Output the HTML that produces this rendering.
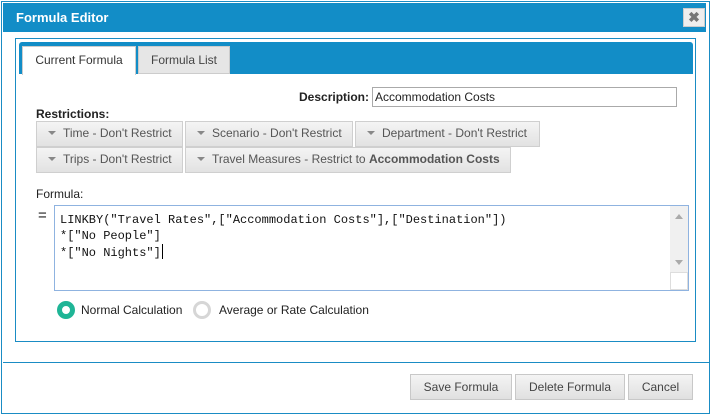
<!DOCTYPE html>
<html><head><style>
*{box-sizing:border-box;margin:0;padding:0}
body{width:714px;height:416px;background:#fff;font-family:"Liberation Sans",Arial,sans-serif;font-size:12px;color:#222;position:relative;overflow:hidden}
.a{position:absolute}
.btn{position:absolute;background:linear-gradient(#f4f4f4,#e2e2e2);border:1px solid #cfcfcf;color:#555;font-size:12px;line-height:23px;padding-left:10px;white-space:nowrap}
.btn i{display:inline-block;width:0;height:0;border-left:4px solid transparent;border-right:4px solid transparent;border-top:4px solid #888;vertical-align:middle;margin:0 7px 2px 1px}
.fb{position:absolute;background:linear-gradient(#f4f4f4,#e0e0e0);border:1px solid #c8c8c8;color:#444;text-align:center;line-height:24px}
</style></head><body>
<div class="a" style="left:1px;top:1px;width:709px;height:413px;border:1px solid #1a8cc4"></div>
<div class="a" style="left:3px;top:3px;width:703px;height:29px;background:#128dc7;color:#fff;font-weight:bold;font-size:13px;line-height:29px;padding-left:13px">Formula Editor</div>
<div class="a" style="left:683px;top:8px;width:22px;height:19px;background:#eee;border:1px solid #ccc;color:#777;font-weight:bold;text-align:center;line-height:17px;font-size:14px">✖</div>
<div class="a" style="left:15px;top:38px;width:681px;height:304px;border:1px solid #1a8cc4"></div>
<div class="a" style="left:19px;top:42px;width:674px;height:32px;background:#128dc7;border-radius:3px 3px 0 0"></div>
<div class="a" style="left:22px;top:46px;width:114px;height:29px;background:#fff;border:1px solid #ccc;border-bottom:none;text-align:center;line-height:27px;color:#333">Current Formula</div>
<div class="a" style="left:138px;top:46px;width:92px;height:28px;background:#e6e6e6;border:1px solid #ccc;text-align:center;line-height:26px;color:#444">Formula List</div>
<div class="a" style="left:299px;top:90px;font-weight:bold">Description:</div>
<div class="a" style="left:372px;top:87px;width:305px;height:20px;border:1px solid #aaa;padding-left:2px;line-height:18px">Accommodation Costs</div>
<div class="a" style="left:36px;top:107px;font-weight:bold">Restrictions:</div>
<div class="btn" style="left:36px;top:121px;width:147px;height:26px"><i></i>Time - Don't Restrict</div>
<div class="btn" style="left:185px;top:121px;width:168px;height:26px"><i></i>Scenario - Don't Restrict</div>
<div class="btn" style="left:355px;top:121px;width:185px;height:26px"><i></i>Department - Don't Restrict</div>
<div class="btn" style="left:36px;top:147px;width:147px;height:26px"><i></i>Trips - Don't Restrict</div>
<div class="btn" style="left:185px;top:147px;width:326px;height:26px"><i></i>Travel Measures - Restrict to <b>Accommodation Costs</b></div>
<div class="a" style="left:36px;top:187px">Formula:</div>
<div class="a" style="left:38px;top:207px;font-size:15px">=</div>
<div class="a" style="left:54px;top:205px;width:635px;height:86px;border:1px solid #8fb3e0;font-family:'Liberation Mono',monospace;font-size:12px;line-height:16px;padding:6px 0 0 5px;color:#111;white-space:pre">LINKBY("Travel Rates",["Accommodation Costs"],["Destination"])
*["No People"]
*["No Nights"]<span style="display:inline-block;width:1px;height:15px;background:#000;vertical-align:-3px;margin-left:1px"></span></div>
<div class="a" style="left:670px;top:206px;width:18px;height:84px;background:#f0f0f0"></div>
<div class="a" style="left:675px;top:214px;border-left:4px solid transparent;border-right:4px solid transparent;border-bottom:5px solid #aaa"></div>
<div class="a" style="left:675px;top:260px;border-left:4px solid transparent;border-right:4px solid transparent;border-top:5px solid #aaa"></div>
<div class="a" style="left:670px;top:272px;width:18px;height:18px;background:#fff;border:1px solid #ddd"></div>
<div class="a" style="left:57px;top:301px;width:18px;height:18px;border-radius:50%;border:5px solid #1fb596;background:#fff"></div>
<div class="a" style="left:81px;top:303px">Normal Calculation</div>
<div class="a" style="left:193px;top:301px;width:18px;height:18px;border-radius:50%;border:3px solid #d6d6d6;background:#fff"></div>
<div class="a" style="left:219px;top:303px">Average or Rate Calculation</div>
<div class="a" style="left:3px;top:362px;width:706px;height:1px;background:#1a8cc4"></div>
<div class="fb" style="left:410px;top:374px;width:102px;height:26px">Save Formula</div>
<div class="fb" style="left:515px;top:374px;width:110px;height:26px">Delete Formula</div>
<div class="fb" style="left:628px;top:374px;width:65px;height:26px">Cancel</div>
</body></html>
